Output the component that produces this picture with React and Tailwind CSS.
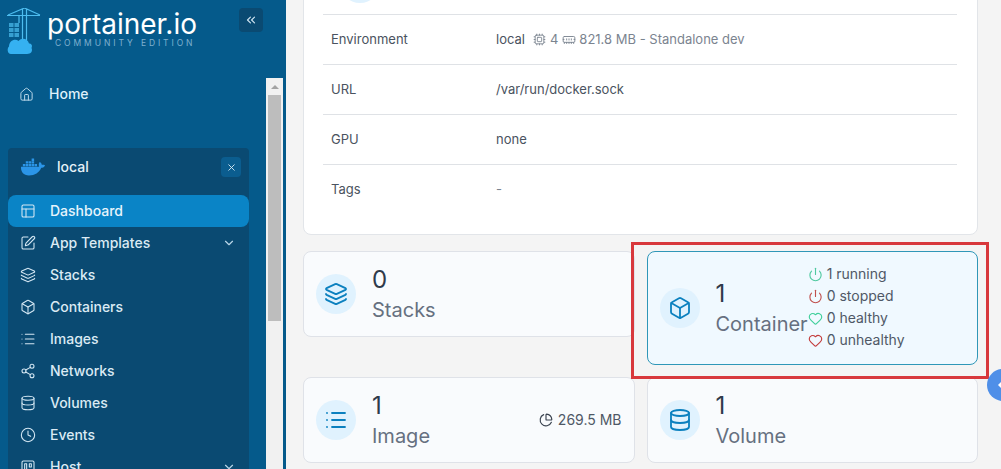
import { Home, PanelsTopLeft, SquarePen, Layers, Box, List, Share2, Database, Clock, ChevronDown, ChevronsLeft, X, Cpu, MemoryStick, Power, Heart, ChartPie } from 'lucide-react'
import { FiTrello } from 'react-icons/fi'
import { FaDocker } from 'react-icons/fa'

const NAV = [
  { label: 'Dashboard', icon: PanelsTopLeft, active: true },
  { label: 'App Templates', icon: SquarePen, chevron: true },
  { label: 'Stacks', icon: Layers },
  { label: 'Containers', icon: Box },
  { label: 'Images', icon: List },
  { label: 'Networks', icon: Share2 },
  { label: 'Volumes', icon: Database },
  { label: 'Events', icon: Clock },
  { label: 'Host', icon: FiTrello, chevron: true },
]

function Logo() {
  return (
    <svg width="36" height="46" viewBox="0 0 36 46" fill="none" aria-hidden="true" className="shrink-0">
      {/* crane */}
      <path d="M0 7.500h33M15.500 1V32M19.500 1V32M17.500 0L1 7M17.500 0L33 7M12 8v7" stroke="#4dbdf0" strokeWidth="1.200" />
      {/* containers */}
      <path d="M2 15h4.500v4H2zM7.500 15H12v4H7.500zM2 20h4.500v4H2zM7.500 20H12v4H7.500zM2 25h4.500v4H2zM7.500 25H12v4H7.500z" fill="#4dbdf0" opacity="0.7" />
      {/* cloud */}
      <path d="M4 46C0 46 0 40 2 38.500 2 33 8 30 11.500 33 15 29 21 31 22 35.500 25 35.500 25.500 38 24.500 40 26 43 24 46 20 46z" fill="#35b1f1" />
    </svg>
  )
}

function NavRow({ item }) {
  const Icon = item.icon
  return (
    <div className={`flex h-8 shrink-0 items-center rounded-lg pl-[12px] pr-[13px] text-sm font-medium ${item.active ? 'bg-[#0a84c6] text-[#e6f4fc]' : 'text-[#dbeaf4]'}`}>
      <Icon size={16} strokeWidth={1.6} className="shrink-0 text-[#d5e8f4]" />
      <span className="ml-[14px] flex-1">{item.label}</span>
      {item.chevron && <ChevronDown size={14} className="text-[#b9d6e8]" />}
    </div>
  )
}

function Sidebar() {
  return (
    <aside className="flex h-full w-[286px] shrink-0 flex-col bg-[#055a8b] pr-[3px]">
      <div className="flex h-[78px] shrink-0 items-start pl-[7px] pt-[8px]">
        <Logo />
        <div className="ml-[4px] w-[156px]">
          <div className="mt-[1px] text-[28px] leading-[30px] text-white">portainer.io</div>
          <div className="mt-[-1px] pl-[8px] text-[8.500px] leading-[10px] tracking-[2.900px] text-[#7fb0cf]">COMMUNITY EDITION</div>
        </div>
        <div className="ml-[36px] flex h-6 w-6 items-center justify-center rounded bg-[#0a4a72] text-[#cfe3f0]">
          <ChevronsLeft size={14} />
        </div>
      </div>
      <div className="flex min-h-0 flex-1">
        <div className="flex w-[266px] shrink-0 flex-col px-[8px]">
          <div className="flex h-8 shrink-0 items-center pl-[11px] text-sm font-medium text-[#dff0fa]">
            <Home size={15} strokeWidth={1.6} className="shrink-0 text-[#bcd9ea]" />
            <span className="ml-[15px]">Home</span>
          </div>
          <div className="mt-[38px] flex min-h-0 w-[241px] flex-1 flex-col rounded-t bg-[#0a4a72]">
            <div className="mb-[9px] flex h-[38px] shrink-0 items-center pl-[13px] pr-[8px]">
              <FaDocker size={24} className="text-[#2b95e8]" />
              <span className="ml-[12px] flex-1 text-sm font-medium text-[#e6f1f8]">local</span>
              <div className="flex h-[20px] w-[20px] items-center justify-center rounded bg-[#0b5d8f] text-[#d8e9f4]">
                <X size={11} />
              </div>
            </div>
            {NAV.map((item) => <NavRow key={item.label} item={item} />)}
          </div>
        </div>
        <div className="flex w-[17px] shrink-0 flex-col bg-[#f1f1f1]">
          <div className="flex h-[17px] shrink-0 items-center justify-center">
            <div className="h-0 w-0 border-x-[4px] border-b-[4px] border-x-transparent border-b-[#a3a3a3]" />
          </div>
          <div className="mx-[2px] h-[226px] bg-[#bdbdbd]" />
        </div>
      </div>
    </aside>
  )
}

function InfoRow({ label, children }) {
  return (
    <div className="flex h-[50px] items-center border-t border-[#dfe2e6] pl-[8px] text-[13px] text-[#4a5360]">
      <div className="w-[165px] shrink-0">{label}</div>
      <div className="flex items-center">{children}</div>
    </div>
  )
}

function IconCircle({ icon: Icon }) {
  return (
    <div className="flex h-10 w-10 shrink-0 items-center justify-center rounded-full bg-[#e0f2fe] text-[#0b80bf]">
      <Icon size={24} strokeWidth={1.8} />
    </div>
  )
}

function StatCard({ icon, value, label, highlight, children }) {
  return (
    <div className={`flex items-center rounded-lg border pl-[12px] pr-[12px] ${highlight ? 'h-[114px] border-[#2f97b8] bg-[#f0f9ff]' : 'h-[86px] border-[#dfe2e8] bg-[#f9fbfd]'}`}>
      <IconCircle icon={icon} />
      <div className="ml-[16px] min-w-0 flex-none">
        <div className="text-2xl leading-[32px] text-[#2f3a4a]">{value}</div>
        <div className="text-xl leading-[28px] text-[#667080]">{label}</div>
      </div>
      {children}
    </div>
  )
}

function Status({ icon: Icon, color, children }) {
  return (
    <div className="flex h-[22px] items-center text-sm text-[#4f5866]">
      <Icon size={15} strokeWidth={1.8} className={`shrink-0 ${color}`} />
      <span className="ml-[4px]">{children}</span>
    </div>
  )
}

export default function App() {
  return (
    <div className="relative flex h-[469px] w-[1001px] overflow-hidden bg-[#f4f4f4] font-['Inter',sans-serif]">
      <Sidebar />
      <main className="w-[715px] shrink-0 pl-[17px] pr-[23px]">
        <div className="-mt-[41px] rounded-lg border border-[#e2e5e9] bg-white pb-[20px] pl-[19px] pr-[20px]">
          <div className="h-[54px] pl-[17px] pt-[3px]">
            <div className="h-10 w-10 rounded-full bg-[#e0f2fe]" />
          </div>
          <InfoRow label="Environment">
            <span>local</span>
            <span className="ml-[8px] flex items-center text-[#7b8490]">
              <Cpu size={13} strokeWidth={1.6} />
              <span className="ml-[4px]">4</span>
              <MemoryStick size={14} strokeWidth={1.6} className="ml-[4px]" />
              <span className="ml-[3px]">821.8 MB - Standalone dev</span>
            </span>
          </InfoRow>
          <InfoRow label="URL">/var/run/docker.sock</InfoRow>
          <InfoRow label="GPU">none</InfoRow>
          <InfoRow label="Tags"><span className="text-[#7b8490]">-</span></InfoRow>
        </div>
        <div className="mt-[16px] grid grid-cols-2 items-start gap-x-[12px] gap-y-[12px]">
          <StatCard icon={Layers} value="0" label="Stacks" />
          <StatCard icon={Box} value="1" label="Container" highlight>
            <div className="mb-[2px]">
              <Status icon={Power} color="text-[#4fc9a0]">1 running</Status>
              <Status icon={Power} color="text-[#c0504d]">0 stopped</Status>
              <Status icon={Heart} color="text-[#3ecf9a]">0 healthy</Status>
              <Status icon={Heart} color="text-[#c23b3b]">0 unhealthy</Status>
            </div>
          </StatCard>
          <StatCard icon={List} value="1" label="Image">
            <div className="ml-auto flex items-center text-sm text-[#4f5866]">
              <ChartPie size={14} strokeWidth={2} className="text-[#3a4350]" />
              <span className="ml-[5px]">269.5 MB</span>
            </div>
          </StatCard>
          <StatCard icon={Database} value="1" label="Volume" />
        </div>
      </main>
      {/* annotation drawn over the screenshot */}
      <div className="absolute left-[631px] top-[242px] h-[137px] w-[358px] border-[3px] border-[#d8383c]" />
      {/* floating help button, clipped by the window */}
      <div className="absolute left-[987px] top-[369px] flex h-[32px] w-[32px] items-center rounded-full bg-[#4f8fe8] pl-[11px]">
        <div className="h-0 w-0 border-y-[4px] border-r-[4px] border-y-transparent border-r-white" />
      </div>
    </div>
  )
}
